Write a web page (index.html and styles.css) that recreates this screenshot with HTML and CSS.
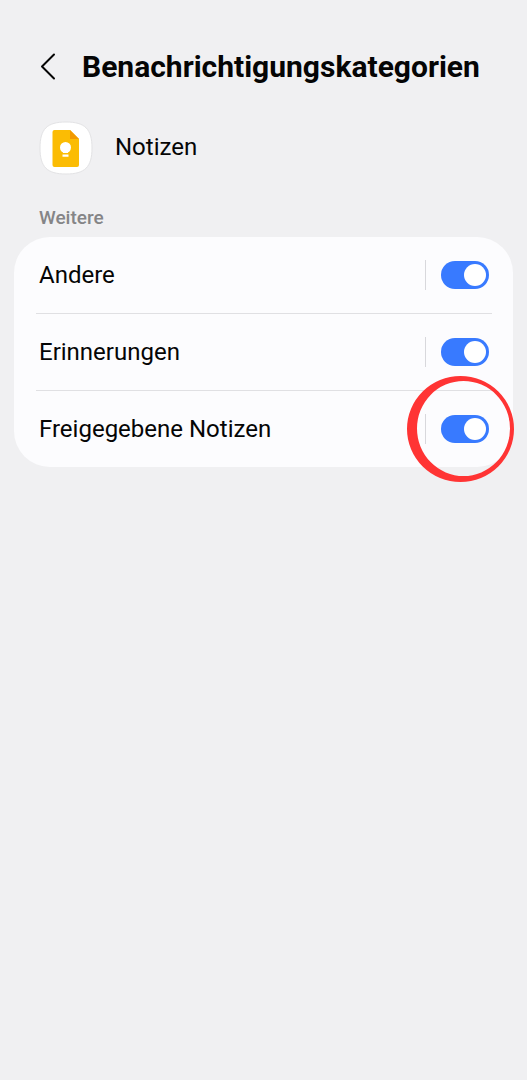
FILE: index.html
```html
<!DOCTYPE html>
<html lang="de">
<head>
<meta charset="utf-8">
<meta name="viewport" content="width=device-width, initial-scale=1">
<title>Benachrichtigungskategorien</title>
<link rel="stylesheet" href="styles.css">
</head>
<body>
<header class="topbar">
  <button class="back" type="button" aria-label="Zurück">
    <svg width="16" height="28" viewBox="0 0 16 28" fill="none" stroke="#050505" stroke-width="2" stroke-linecap="round" stroke-linejoin="round"><path d="M14 2.500 2 14.500 14 26.500"/></svg>
  </button>
  <h1 class="title">Benachrichtigungskategorien</h1>
</header>
<main>
  <div class="app">
    <svg class="app-icon" width="54" height="54" viewBox="0 0 54 54" aria-hidden="true">
      <path d="M27 1C46 1 53 8 53 27S46 53 27 53 1 46 1 27 8 1 27 1Z" fill="#fff" stroke="#e3e3e5"/>
      <path d="M15.500 9H31L40 18V44a2 2 0 0 1-2 2H15.500A2 2 0 0 1 13.500 44V11A2 2 0 0 1 15.500 9Z" fill="#fbbc04"/>
      <path d="M31 9 40 18H31Z" fill="#f29900"/>
      <circle cx="26.500" cy="26.500" r="5.500" fill="#fff"/>
      <path d="M24 30h5v2h-5ZM23.500 33.500h6v2.200h-6Z" fill="#fff"/>
    </svg>
    <span class="app-name">Notizen</span>
  </div>
  <h2 class="section">Weitere</h2>
  <ul class="card">
    <li class="row">
      <label class="name" for="s1">Andere</label>
      <span class="control"><input class="switch" id="s1" type="checkbox" role="switch" checked></span>
    </li>
    <li class="row">
      <label class="name" for="s2">Erinnerungen</label>
      <span class="control"><input class="switch" id="s2" type="checkbox" role="switch" checked></span>
    </li>
    <li class="row">
      <label class="name" for="s3">Freigegebene Notizen</label>
      <span class="control"><input class="switch" id="s3" type="checkbox" role="switch" checked>
        <svg class="ring" width="108" height="108" viewBox="0 0 108 108" aria-hidden="true"><path fill="#ff3434" fill-rule="evenodd" d="M0 54a53.500 53 0 1 0 107 0a53.500 53 0 1 0-107 0ZM10 53.500a46.500 47.500 0 1 0 93 0a46.500 47.500 0 1 0-93 0Z"/></svg>
      </span>
    </li>
  </ul>
</main>
</body>
</html>
```
FILE: styles.css
```css
* {
  box-sizing: border-box;
}

body {
  margin: 0;
  padding: 47px 14px 0;
  min-height: 100vh;
  background: #f0f0f2;
  color: #050505;
  font-family: Roboto, "Liberation Sans", sans-serif;
}

.topbar {
  display: flex;
  align-items: center;
  gap: 26px;
  padding-left: 26px;
  height: 40px;
}

.back {
  display: flex;
  padding: 0 0 2px;
  border: 0;
  background: none;
}

.title {
  margin: 0;
  font-size: 30px;
  line-height: 40px;
  font-weight: 700;
}

.app {
  display: flex;
  align-items: center;
  gap: 22px;
  margin-top: 34px;
  padding-left: 25px;
}

.app-icon {
  flex: none;
}

.app-name {
  padding-bottom: 3px;
  font-size: 24px;
  line-height: 32px;
}

.section {
  margin: 31px 0 8px;
  padding-left: 25px;
  font-size: 19px;
  line-height: 23px;
  font-weight: 500;
  color: #858587;
}

.card {
  margin: 0;
  padding: 0 21px 0 22px;
  list-style: none;
  background: #fcfcfe;
  border-radius: 36px;
}

.row {
  box-sizing: content-box;
  display: flex;
  align-items: center;
  min-height: 76px;
  padding: 0 3px;
}

.row + .row {
  border-top: 1px solid #e0e0e3;
}

.name {
  flex: 1;
  font-size: 24px;
  line-height: 32px;
}

.control {
  position: relative;
  display: flex;
  align-items: center;
  height: 30px;
  padding-left: 15px;
  border-left: 1px solid #d8d8dc;
}

.switch {
  appearance: none;
  display: flex;
  align-items: center;
  justify-content: flex-end;
  width: 48px;
  height: 28px;
  margin: 0;
  padding: 0 3px;
  border-radius: 14px;
  background: #387aff;
}

.switch::before {
  content: "";
  width: 22px;
  height: 22px;
  border-radius: 50%;
  background: #fff;
}

.switch:not(:checked) {
  justify-content: flex-start;
  background: #a0a0a5;
}

.ring {
  position: absolute;
  top: -39px;
  right: -26px;
  pointer-events: none;
}
```
